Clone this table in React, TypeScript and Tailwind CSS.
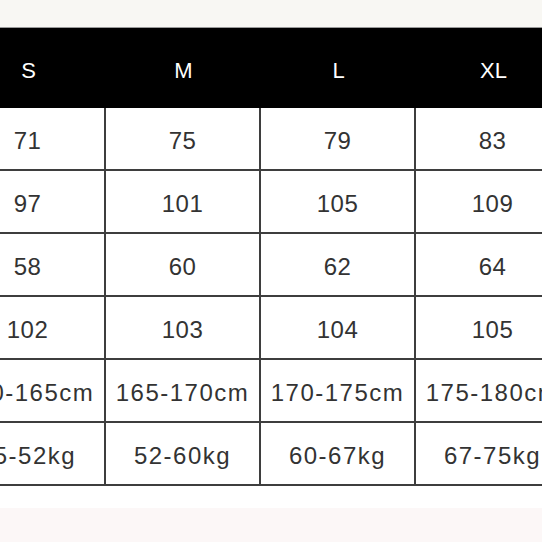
import React from "react";

const header = ["S", "M", "L", "XL"];
const rows: { cells: string[]; wide?: boolean }[] = [
  { cells: ["71", "75", "79", "83"] },
  { cells: ["97", "101", "105", "109"] },
  { cells: ["58", "60", "62", "64"] },
  { cells: ["102", "103", "104", "105"] },
  { cells: ["160-165cm", "165-170cm", "170-175cm", "175-180cm"], wide: true },
  { cells: ["45-52kg", "52-60kg", "60-67kg", "67-75kg"], wide: true },
];

export default function App() {
  return (
    <div
      className="w-[542px] h-[542px] overflow-hidden bg-white flex flex-col"
      style={{ fontFamily: '"Liberation Sans", Arial, sans-serif' }}
    >
      <div className="h-[27px] shrink-0 bg-[#f8f7f3]" />
      <div className="h-[1px] shrink-0 bg-[#9a9a9a]" />
      <div className="ml-[-49px] w-[640px] shrink-0">
        <div className="grid grid-cols-[155px_155px_155px_155px] h-[80px] bg-black">
          {header.map((h) => (
            <div
              key={h}
              className="flex items-center justify-center pt-[5px] text-white text-[22px]"
            >
              {h}
            </div>
          ))}
        </div>
        {rows.map((r, i) => (
          <div
            key={i}
            className="grid grid-cols-[155px_155px_155px_155px] h-[63px] border-b-2 border-[#3e3e3e]"
          >
            {r.cells.map((c, j) => (
              <div
                key={j}
                className={`flex items-center justify-center pt-[4px] text-[24px] text-[#333333] whitespace-nowrap border-r-2 border-[#3e3e3e] ${
                  r.wide ? "tracking-[1.5px]" : "tracking-[0.5px]"
                }`}
              >
                {c}
              </div>
            ))}
          </div>
        ))}
      </div>
      <div className="h-[22px] shrink-0 bg-white" />
      <div className="flex-1 bg-[#fcf7f7]" />
    </div>
  );
}
